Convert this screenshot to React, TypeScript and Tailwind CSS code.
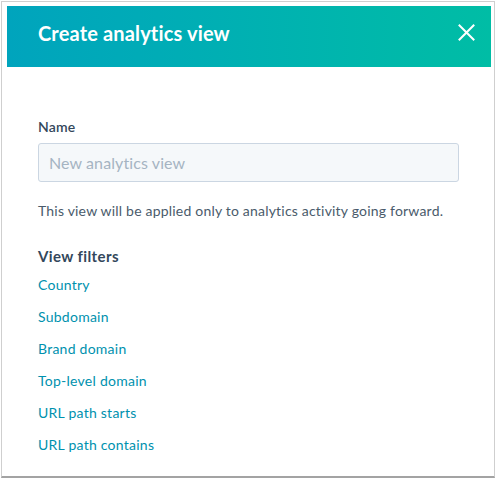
const filters = [
  "Country",
  "Subdomain",
  "Brand domain",
  "Top-level domain",
  "URL path starts",
  "URL path contains",
];

export default function App() {
  return (
    <div className="w-[497px] h-[479px] bg-white overflow-hidden font-['Lato','Open_Sans',sans-serif]">
      <div className="ml-[1px] mt-[1px] w-[494px] h-[477px] border border-[#cfcfcf] border-b-2 border-b-[#a3a3a3] bg-white pt-[4px] pl-[5px] pr-[3px]">
        {/* header */}
        <div className="h-[61px] flex items-start justify-between pl-[31px] pr-[16px] pt-[13px] bg-gradient-to-r from-[#00a4bd] to-[#00bda5]">
          <h1 className="text-[20px] leading-[28px] font-bold text-white tracking-[0.15px]">Create analytics view</h1>
          <svg width="17" height="17" viewBox="0 0 17 17" className="mt-[5px]" fill="none" stroke="white" strokeWidth="2" strokeLinecap="square">
            <path d="M1.5 1.5 15.5 15.5M15.5 1.5 1.5 15.5" />
          </svg>
        </div>

        {/* body */}
        <div className="pl-[31px] pr-[32px] pt-[50px] text-[#33475b]">
          <label className="block text-[14px] leading-[20px] font-semibold tracking-[0.2px]">Name</label>
          <div className="mt-[6px] h-[39px] rounded-[3px] border border-[#cbd6e2] bg-[#f5f8fa] flex items-center px-[10px]">
            <span className="text-[16px] text-[#a5b4c2] tracking-[0.1px]">New analytics view</span>
          </div>
          <p className="mt-[19px] text-[14px] leading-[20px] text-[#4a5b6b] tracking-[0.2px]">
            This view will be applied only to analytics activity going forward.
          </p>
          <h2 className="mt-[25px] text-[15px] leading-[20px] font-bold tracking-[0.4px]">View filters</h2>
          <ul className="mt-[9px] flex flex-col gap-[12px]">
            {filters.map((f) => (
              <li key={f} className="text-[14px] leading-[20px] text-[#0091ae] tracking-[0.25px]">
                {f}
              </li>
            ))}
          </ul>
        </div>
      </div>
    </div>
  );
}
